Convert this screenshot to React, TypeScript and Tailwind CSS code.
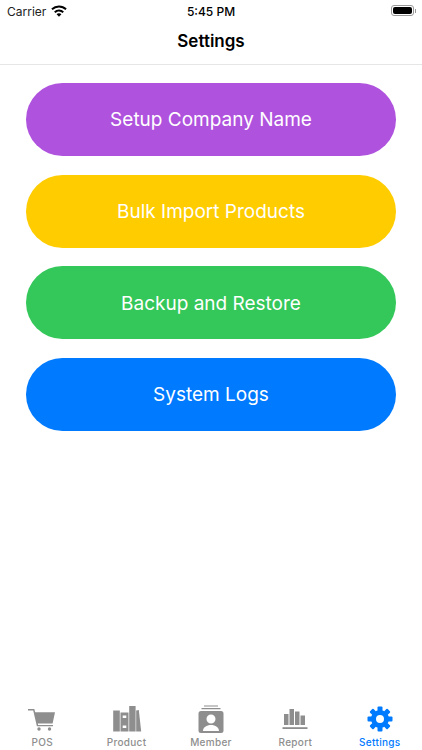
import React from 'react';

const buttons = [
  { label: 'Setup Company Name', color: 'bg-[#af52de]' },
  { label: 'Bulk Import Products', color: 'bg-[#ffcc00]' },
  { label: 'Backup and Restore', color: 'bg-[#34c759]' },
  { label: 'System Logs', color: 'bg-[#007aff]' },
];

const CartIcon = () => (
  <svg width="30" height="26" viewBox="0 0 30 26" fill="#8e8e8e">
    <path d="M1 3h6.300l.9 3.200H28l-2.400 11.300H10.800l.3 1.500H26v1.300H9.900L6.200 4.400H1z" />
    <circle cx="12" cy="23" r="1.700" />
    <circle cx="22.500" cy="23" r="1.700" />
  </svg>
);

const BooksIcon = () => (
  <svg width="30" height="28" viewBox="0 0 30 28" fill="#8e8e8e">
    <path d="M1.200 5.500h6.600v21H1.200z" />
    <path fillRule="evenodd" d="M8.500 7.500h8v19h-8zM10.700 10.500v2.500h3.600v-2.500zM10.700 20.500v2.500h3.600v-2.500z" />
    <path d="M17.200 1h6.400v25.500h-6.400z" />
    <path d="M24.200 5.500l2.600-.5 2.400 21.500h-5z" />
  </svg>
);

const MemberIcon = () => (
  <svg width="26" height="28" viewBox="0 0 26 28" fill="#8e8e8e">
    <path d="M6 0.500h14v1H6zM3.500 3h19v1.200h-19z" />
    <path
      fillRule="evenodd"
      d="M3 6h20a2.500 2.500 0 0 1 2.500 2.500v17a2.500 2.500 0 0 1-2.500 2.500H3a2.500 2.500 0 0 1-2.500-2.500v-17A2.500 2.500 0 0 1 3 6zM13 9.500a4.500 4.500 0 1 0 0 9 4.500 4.500 0 0 0 0-9zM5 26h16c0-3.500-3.500-6-8-6s-8 2.500-8 6z"
    />
  </svg>
);

const ReportIcon = () => (
  <svg width="26" height="22" viewBox="0 0 26 22" fill="#8e8e8e">
    <rect x="2" y="6" width="4.500" height="11" />
    <rect x="7.500" y="1" width="4.500" height="16" />
    <rect x="13" y="3.500" width="4.500" height="13.500" />
    <rect x="18.500" y="7.500" width="4.500" height="9.500" />
    <rect x="0.500" y="19.200" width="25" height="1.800" />
  </svg>
);

const GearIcon = () => {
  const teeth = [0, 45, 90, 135, 180, 225, 270, 315];
  return (
    <svg width="26" height="26" viewBox="0 0 26 26">
      <path
        fillRule="evenodd"
        fill="#007aff"
        d="M13 4a9 9 0 1 0 0 18 9 9 0 0 0 0-18zM13 9a4 4 0 1 1 0 8 4 4 0 0 1 0-8z"
      />
      {teeth.map(a => (
        <rect key={a} x="10.500" y="0.500" width="5" height="5" rx="1" fill="#007aff" transform={`rotate(${a} 13 13)`} />
      ))}
    </svg>
  );
};

const tabs = [
  { label: 'POS', icon: <CartIcon /> },
  { label: 'Product', icon: <BooksIcon /> },
  { label: 'Member', icon: <MemberIcon /> },
  { label: 'Report', icon: <ReportIcon /> },
  { label: 'Settings', icon: <GearIcon />, active: true },
];

export default function App() {
  return (
    <div className="flex h-[750px] w-[422px] flex-col overflow-hidden bg-white font-['Inter',sans-serif] text-black">
      <div className="relative flex h-[20px] shrink-0 items-center justify-between pl-[7px] pr-[6px] pt-[4px] text-[12px]">
        <div className="flex items-center gap-[5px]">
          <span className="text-[#222]">Carrier</span>
          <svg className="mb-[2px]" width="16" height="12" viewBox="0 0 16 12" fill="#000">
            <path d="M8 0.500c3 0 5.700 1.200 7.700 3.100l-1.300 1.400A9.200 9.200 0 0 0 8 2.400 9.200 9.200 0 0 0 1.600 5L.3 3.600A11 11 0 0 1 8 .5z" />
            <path d="M8 4.500c1.900 0 3.600.7 4.900 2l-1.300 1.400A5.200 5.200 0 0 0 8 6.400c-1.400 0-2.700.6-3.600 1.500L3.100 6.500a7 7 0 0 1 4.900-2z" />
            <path d="M8 8.300c1 0 1.800.4 2.400 1L8 11.800 5.600 9.300c.6-.6 1.400-1 2.400-1z" />
          </svg>
        </div>
        <span className="absolute left-0 right-0 text-center text-[12px] font-medium">5:45 PM</span>
        <div className="mb-[3px] flex items-center gap-[1px]">
          <div className="flex h-[11px] w-[23px] items-center rounded-[3px] border border-[#999] p-[1px]">
            <div className="h-full w-full rounded-[2px] bg-black" />
          </div>
          <div className="h-[4px] w-[1px] bg-[#999]" />
        </div>
      </div>

      <div className="flex h-[45px] shrink-0 items-center justify-center border-b border-[#e6e6e6] text-[17px] font-semibold">
        Settings
      </div>

      <div className="flex flex-1 flex-col gap-[18.700px] px-[26px] pt-[18px]">
        {buttons.map(b => (
          <div
            key={b.label}
            className={`flex h-[73px] items-center justify-center rounded-[36.500px] pt-[2px] text-[19px] text-white ${b.color}`}
          >
            {b.label}
          </div>
        ))}
      </div>

      <div className="grid h-[49px] shrink-0 grid-cols-5">
        {tabs.map(t => (
          <div key={t.label} className="flex flex-col items-center">
            <div className="flex h-[35px] items-center justify-center">{t.icon}</div>
            <span className={`text-[10px] leading-[12px] font-medium tracking-[0.3px] ${t.active ? 'text-[#007aff]' : 'text-[#8e8e8e]'}`}>{t.label}</span>
          </div>
        ))}
      </div>
    </div>
  );
}
